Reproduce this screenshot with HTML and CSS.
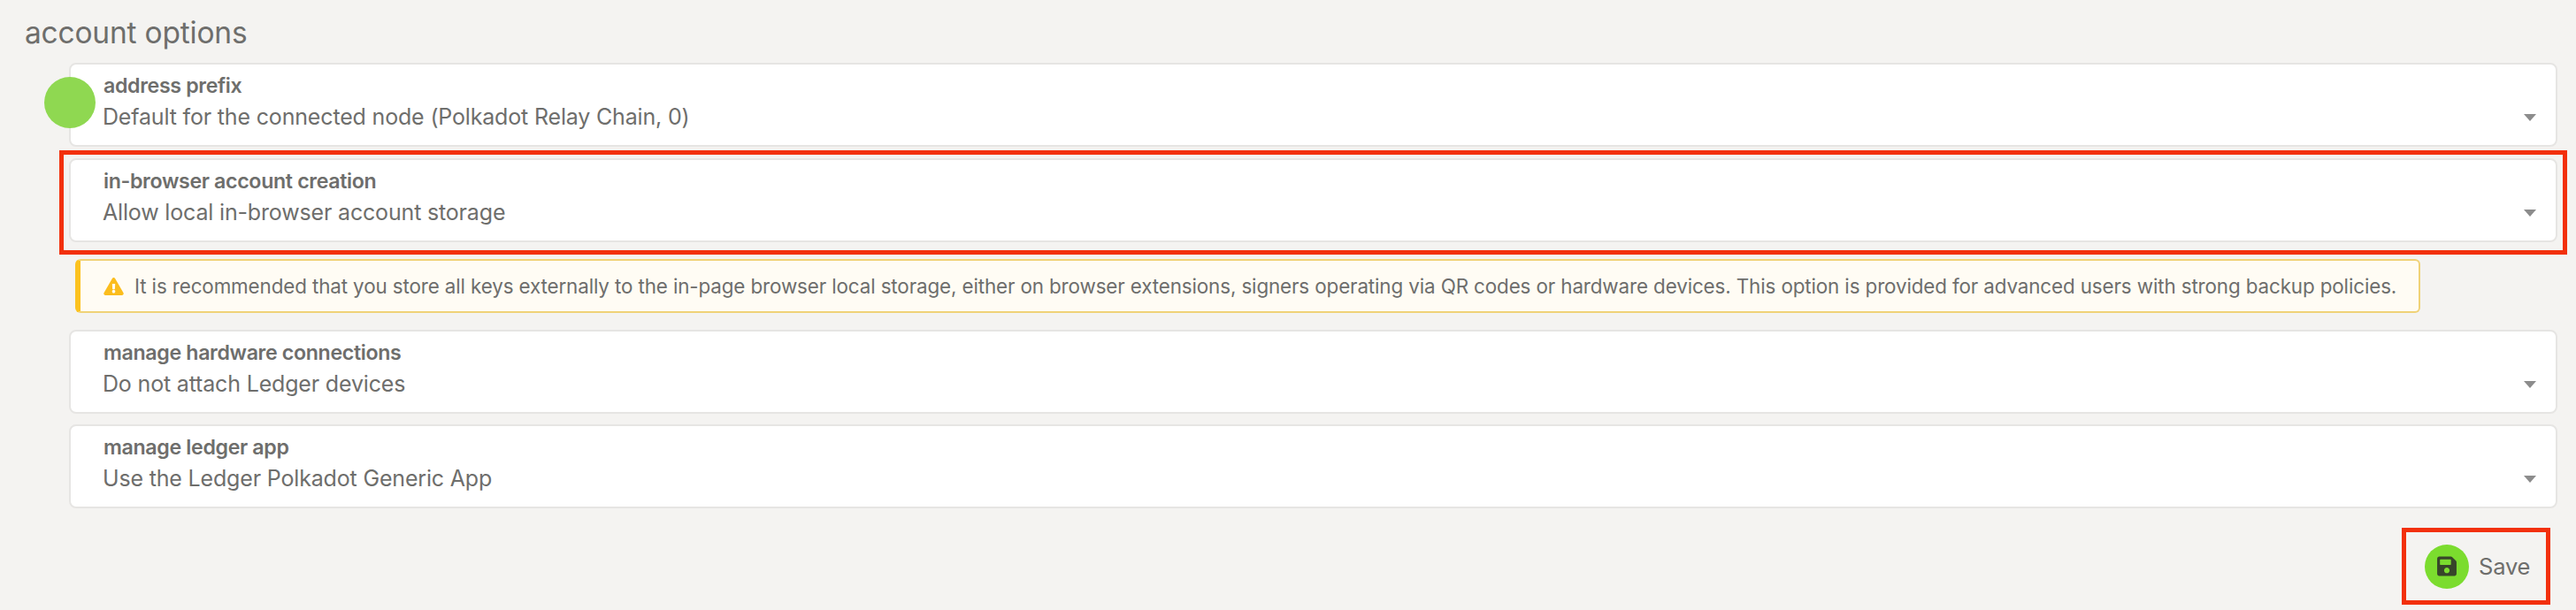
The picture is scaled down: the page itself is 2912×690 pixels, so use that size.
FILE: index.html

```html
<html>
    <head>
       <link rel="stylesheet" href="styles.css">
    </head>
    <body>
       <h1 class="title">account options</h1>
       <div class="options">
          <span class="dot"></span>
          <div class="dropdown">
             <div class="dropdown-text">
                <label class="dropdown-label">address prefix</label>
                <div class="dropdown-value">Default for the connected node (Polkadot Relay Chain, 0)</div>
             </div>
             <span class="caret"></span>
          </div>
          <div class="dropdown">
             <div class="dropdown-text">
                <label class="dropdown-label">in-browser account creation</label>
                <div class="dropdown-value">Allow local in-browser account storage</div>
             </div>
             <span class="caret"></span>
             <!-- red annotation round the row -->
             <span class="mark"></span>
          </div>
          <div class="warning">
             <svg class="warning-icon" viewBox="0 0 576 512"><path d="M569.517 440.013C587.975 472.007 564.806 512 527.94 512H48.054c-36.937 0-59.999-40.055-41.577-71.987L246.423 24c18.467-32.009 64.72-31.951 83.154 0l239.94 416.013zM288 354c-25.405 0-46 20.595-46 46s20.595 46 46 46 46-20.595 46-46-20.595-46-46-46zm-43.673-165.346l7.418 136c.347 6.364 5.609 11.346 11.982 11.346h48.546c6.373 0 11.635-4.982 11.982-11.346l7.418-136c.375-6.874-5.098-12.654-11.982-12.654h-63.383c-6.884 0-12.356 5.78-11.981 12.654z"/></svg>
             <span>It is recommended that you store all keys externally to the in-page browser local storage, either on browser extensions, signers operating via QR codes or hardware devices. This option is provided for advanced users with strong backup policies.</span>
          </div>
          <div class="dropdown">
             <div class="dropdown-text">
                <label class="dropdown-label">manage hardware connections</label>
                <div class="dropdown-value">Do not attach Ledger devices</div>
             </div>
             <span class="caret"></span>
          </div>
          <div class="dropdown">
             <div class="dropdown-text">
                <label class="dropdown-label">manage ledger app</label>
                <div class="dropdown-value">Use the Ledger Polkadot Generic App</div>
             </div>
             <span class="caret"></span>
          </div>
       </div>
       <div class="actions">
          <div class="save">
             <span class="save-circle">
                <svg class="save-icon" viewBox="0 0 448 512"><path d="M433.941 129.941l-83.882-83.882A48 48 0 0 0 316.118 32H48C21.49 32 0 53.49 0 80v352c0 26.51 21.49 48 48 48h352c26.51 0 48-21.49 48-48V163.882a48 48 0 0 0-14.059-33.941zM224 416c-35.346 0-64-28.654-64-64 0-35.346 28.654-64 64-64s64 28.654 64 64c0 35.346-28.654 64-64 64zm96-304.52V212c0 6.627-5.373 12-12 12H76c-6.627 0-12-5.373-12-12V108c0-6.627 5.373-12 12-12h228.52c3.183 0 6.235 1.264 8.485 3.515l3.48 3.48A11.996 11.996 0 0 1 320 111.48z"/></svg>
             </span>
             <span class="save-text">Save</span>
          </div>
       </div>
    </body>
</html>
```

FILE: styles.css

```css
*
{
   margin: 0px;
   box-sizing: border-box;
}
html
{
   background-color: #f4f3f1;
}
body
{
   font-family: Inter, "Noto Sans", sans-serif;
   color: #6e6e6c;
   height: 690px;
   overflow: hidden;
   padding: 17px 21px 0px 28px;
}
.title
{
   font-size: 33.5px;
   font-weight: 400;
   line-height: 40px;
   height: 54px;
   letter-spacing: -0.2px;
}
.options
{
   position: relative;
   display: flex;
   flex-direction: column;
   gap: 12.5px;
   margin-left: 50px;
}
/* green blob over the first row */
.dot
{
   position: absolute;
   z-index: 1;
   left: -28px;
   top: 16px;
   width: 58px;
   height: 58px;
   border-radius: 50%;
   background-color: #8fd851;
}
.dropdown
{
   position: relative;
   display: flex;
   justify-content: space-between;
   align-items: flex-end;
   height: 95px;
   padding: 0px 22px 17px 36px;
   background-color: #ffffff;
   border: 2px solid #e6e5e3;
   border-radius: 8px;
}
.dropdown-label
{
   display: block;
   margin-left: 1px;
   font-size: 23.2px;
   font-weight: 600;
   line-height: 28px;
   letter-spacing: -0.35px;
}
.dropdown-value
{
   margin-top: 6px;
   font-size: 25px;
   line-height: 30px;
   letter-spacing: -0.17px;
}
.caret
{
   width: 0px;
   height: 0px;
   margin-bottom: 10px;
   border-left: 7px solid transparent;
   border-right: 7px solid transparent;
   border-top: 8px solid #8c8c8c;
}
.mark
{
   position: absolute;
   left: -13px;
   right: -13px;
   top: -11px;
   bottom: -16px;
   border: 5px solid #f2300c;
}
.warning
{
   display: flex;
   align-items: center;
   gap: 12px;
   width: 2651px;
   height: 61px;
   margin: 7px 0px 6px 7px;
   padding-left: 26px;
   background-color: #fffcf4;
   border: 2px solid #f0d277;
   border-left: 6px solid #fcc21f;
   border-radius: 6px;
   font-size: 22.4px;
   letter-spacing: -0.12px;
   white-space: nowrap;
}
.warning-icon
{
   width: 23px;
   height: 20px;
   fill: #fbbd1d;
   flex: none;
}
.actions
{
   display: flex;
   justify-content: flex-end;
   margin-top: 22px;
   padding-right: 8px;
}
.save
{
   display: flex;
   align-items: center;
   gap: 11px;
   width: 168px;
   height: 87px;
   padding-left: 21px;
   border: 5px solid #f2300c;
}
.save-circle
{
   display: flex;
   align-items: center;
   justify-content: center;
   width: 50px;
   height: 50px;
   border-radius: 50%;
   background-color: #7bdc2e;
}
.save-icon
{
   width: 22px;
   height: 25px;
   fill: #37452a;
}
.save-text
{
   font-size: 25.5px;
   letter-spacing: -0.2px;
}
```
